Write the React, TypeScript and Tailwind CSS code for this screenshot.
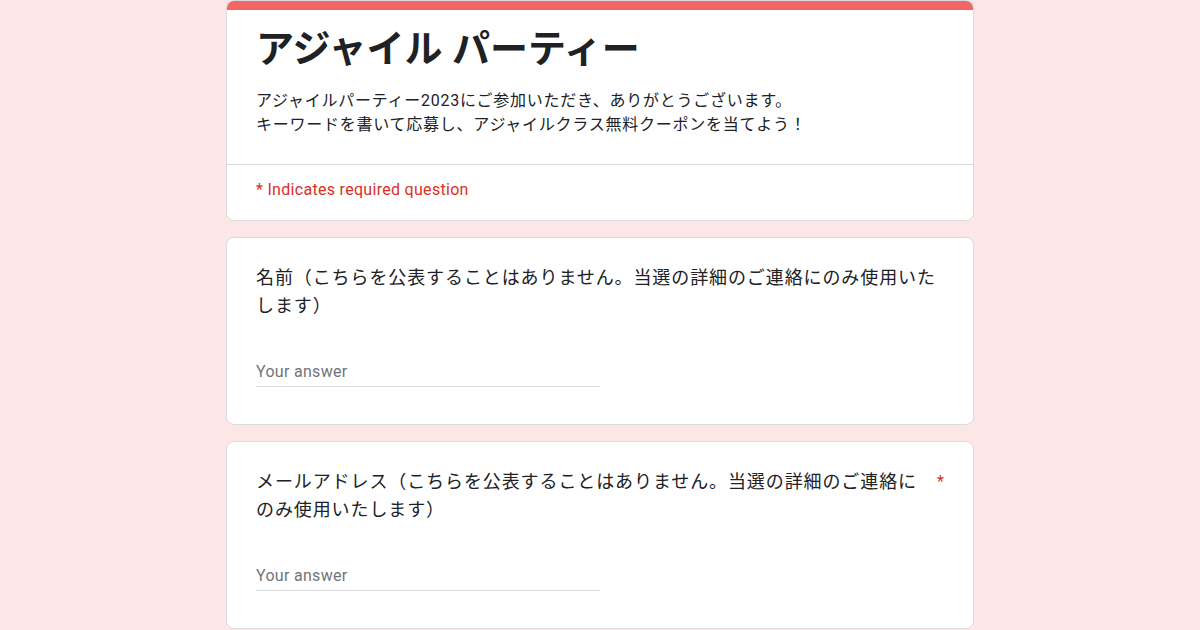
import React from "react";

const font = { fontFamily: 'Roboto, "Noto Sans CJK JP", sans-serif' };

function QuestionCard({ text, required }: { text: string; required?: boolean }) {
  return (
    <div className="rounded-lg border border-[#dadce0] bg-white px-[29px] pt-[26px] pb-[37px]">
      <div className="flex items-start">
        <div className="flex-1 text-[18px] leading-[28px] tracking-[0.9px] text-[#202124]">{text}</div>
        {required && <div className="ml-4 text-[16px] leading-[28px] text-[#d93025]">*</div>}
      </div>
      <div className="mt-[34px] flex h-[33px] w-1/2 items-center border-b border-[#dadce0] pt-[3px]">
        <div className="text-[16px] leading-[20px] tracking-[0.3px] text-[#70757a]">Your answer</div>
      </div>
    </div>
  );
}

export default function App() {
  return (
    <div className="min-h-[630px] w-full bg-[#fde6e6]" style={font}>
      <div className="mx-auto flex w-[748px] flex-col gap-[16px]">
        <div className="overflow-hidden rounded-lg border border-[#dadce0] bg-white">
          <div className="-mx-px -mt-px h-[10px] bg-[#f46565]" />
          <div className="px-[29px] pt-[15px] pb-[27px]">
            <h1 className="text-[38px] font-bold leading-[48px] text-[#202124]">アジャイル パーティー</h1>
            <div className="mt-[16px] text-[16px] leading-[24px] tracking-[0.75px] text-[#202124]">
              <div>アジャイルパーティー2023にご参加いただき、ありがとうございます。</div>
              <div>キーワードを書いて応募し、アジャイルクラス無料クーポンを当てよう！</div>
            </div>
          </div>
          <div className="border-t border-[#dadce0] px-[29px] pt-[15px] pb-[20px] text-[16px] leading-[20px] tracking-[0.3px] text-[#d93025]">
            * Indicates required question
          </div>
        </div>
        <QuestionCard text="名前（こちらを公表することはありません。当選の詳細のご連絡にのみ使用いたします）" />
        <QuestionCard text="メールアドレス（こちらを公表することはありません。当選の詳細のご連絡にのみ使用いたします）" required />
      </div>
    </div>
  );
}
